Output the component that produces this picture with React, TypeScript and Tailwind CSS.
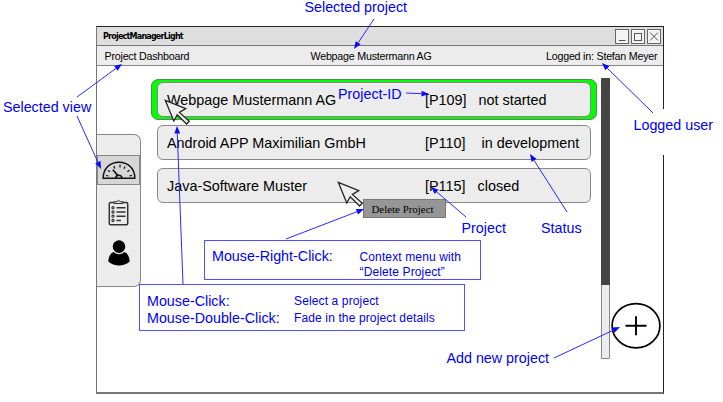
import type { ReactNode } from "react";

const sans = "font-['Liberation_Sans',Arial,sans-serif]";

function Pointer({ className }: { className: string }) {
  return (
    <svg className={`absolute ${className}`} width="28" height="28" viewBox="0 0 28 28">
      <path
        d="M1.3 1.3 L21.8 9.6 L15.4 13.4 L25.3 22.3 L22.6 25 L13.2 15.8 L9.8 22 Z"
        fill="#eee"
        stroke="#222"
        strokeWidth="1.25"
      />
    </svg>
  );
}

function Row({ name, id, status, selected, gap }: { name: string; id: string; status: string; selected?: boolean; gap: string }) {
  const card = (
    <div className="flex h-[35px] w-[434px] items-center rounded-[6px] border border-[#888] bg-[#ececec] pl-[9px] pt-[2px] text-[14.4px] leading-none text-black">
      <span className="w-[258px] whitespace-nowrap">{name}</span>
      <span className="whitespace-nowrap">{id}</span>
      <span className={`whitespace-nowrap ${gap}`}>{status}</span>
    </div>
  );
  if (!selected) return <div className="pl-[6px]">{card}</div>;
  return <div className="flex h-[41px] w-[446px] items-center rounded-[7px] border border-[#5c875c] bg-[#00ff00] pl-[5px]">{card}</div>;
}

function Gauge() {
  return (
    <svg width="34" height="19" viewBox="0 0 34 19" fill="none" stroke="#111" strokeWidth="1.2">
      <path d="M1.2 17.2 C1.2 7.5 8 1.2 17 1.2 S32.8 7.5 32.8 17.2 Z" strokeWidth="1.5" />
      <path d="M4 14.5 L6.5 15 M6 9.5 L8 10.8 M11.8 5 L12.8 7.4 M18 3.8 V6.5 M23 5.5 L22 7.8 M27.4 9.3 L25.4 10.8 M30 14.3 L27.4 15" />
      <path d="M10.8 8.7 L16.3 15" strokeWidth="1.7" />
      <path d="M13.8 17 A3.1 2.7 0 0 1 20 17" strokeWidth="1.5" />
    </svg>
  );
}

function Clipboard() {
  return (
    <svg width="22" height="27" viewBox="0 0 22 27" fill="none" stroke="#333">
      <rect x="1.3" y="3.5" width="18.4" height="22.3" rx="1.2" strokeWidth="1.5" />
      <path d="M6 4.5 V2.7 H8.6 Q10.5 0 12.4 2.7 H15 V4.5 Z" fill="#ddd" />
      <path d="M8.5 8.7 H17.5 M8.5 13 H17.5 M8.5 17.2 H17.5 M8.5 21.5 H13" strokeWidth="1.4" />
      {[8.7, 13, 17.2, 21.5].map((y) => (
        <circle key={y} cx="5" cy={y} r="1.1" strokeWidth="1.1" />
      ))}
    </svg>
  );
}

function Person() {
  return (
    <svg width="22" height="26" viewBox="0 0 22 26">
      <circle cx="11" cy="6.6" r="6.3" />
      <path d="M.3 21.5 C.5 17 2.2 13.6 5.5 12.1 Q11 16.5 16.5 12.1 C19.8 13.6 21.5 17 21.7 21.5 C16 26.7 6 26.7 .3 21.5Z" />
    </svg>
  );
}

function WindowButton({ children }: { children: ReactNode }) {
  return (
    <svg className="border border-[#666] bg-[#f3f3f3]" width="14" height="15" viewBox="0 0 12 13" fill="none" stroke="#555">
      {children}
    </svg>
  );
}

function Note({ className, children }: { className: string; children: ReactNode }) {
  return <div className={`absolute whitespace-nowrap text-[14.3px] leading-[17px] text-[#0000f0] ${className}`}>{children}</div>;
}

// start x, start y, tip x, tip y
const arrows: [number, number, number, number][] = [
  [374, 19, 354, 49],
  [77, 97, 122, 64],
  [77, 116, 101, 169],
  [406, 93, 429, 94],
  [653, 113, 602, 63],
  [183, 284, 177, 126],
  [286, 239, 364, 209],
  [466, 217, 431, 187],
  [567, 212, 530, 154],
  [554, 358, 620, 327],
];

function Arrows() {
  return (
    <svg className="absolute left-0 top-0" width="723" height="402">
      {arrows.map(([x1, y1, x2, y2]) => {
        const a = Math.atan2(y2 - y1, x2 - x1);
        const bx = x2 - 7.5 * Math.cos(a);
        const by = y2 - 7.5 * Math.sin(a);
        const dx = 2.9 * Math.sin(a);
        const dy = 2.9 * Math.cos(a);
        return (
          <g key={`${x1}-${y1}`}>
            <line x1={x1} y1={y1} x2={bx} y2={by} stroke="#2929fb" strokeWidth="1" />
            <polygon points={`${x2},${y2} ${bx - dx},${by + dy} ${bx + dx},${by - dy}`} fill="#0808ff" />
          </g>
        );
      })}
    </svg>
  );
}

export default function App() {
  return (
    <div className={`relative h-[402px] w-[723px] overflow-hidden bg-white pl-[96px] pt-[26px] ${sans}`}>
      <div className="flex h-[368px] w-[568px] flex-col border border-b-2 border-[#777] border-r-[#222] border-t-[#222]">
        <div className="flex h-[19px] shrink-0 items-center border-b border-[#777] bg-[#dedede] pl-[6px] pr-[2px]">
          <span className="grow pt-[2px] font-['DejaVu_Sans',sans-serif] text-[8px] font-bold tracking-[-0.78px] text-black">ProjectManagerLight</span>
          <div className="flex gap-[2px]">
            <WindowButton><path d="M3 10.5 H9.5" /></WindowButton>
            <WindowButton><rect x="2.5" y="3.5" width="7" height="7" /></WindowButton>
            <WindowButton><path d="M2 2.5 L10 10.5 M10 2.5 L2 10.5" /></WindowButton>
          </div>
        </div>
        <div className="flex h-[20px] shrink-0 items-center border-b border-[#888] bg-[#ececec] pl-[7.5px] pt-[2px] text-[10.7px] leading-none tracking-[-0.22px] text-black">
          <span className="w-[206px]">Project Dashboard</span>
          <span className="w-[235.5px]">Webpage Mustermann AG</span>
          <span className="whitespace-nowrap">Logged in: Stefan Meyer</span>
        </div>
        <div className="flex grow">
          <nav className="mt-[68px] flex h-[153px] w-[44px] flex-col items-center rounded-r-[7px] border border-l-0 border-[#888] bg-[#ececec]">
            <div className="mt-[20px] flex h-[30px] w-[43px] shrink-0 items-center justify-center border border-[#888] bg-[#d6d6d6]"><Gauge /></div>
            <div className="mt-[14px]"><Clipboard /></div>
            <div className="mt-[14px]"><Person /></div>
          </nav>
          <main className="ml-[10px] mt-[13px] flex w-[446px] flex-col">
            <Row name="Webpage Mustermann AG" id="[P109]" status="not started" gap="ml-[12px]" selected />
            <div className="mt-[5px]"><Row name="Android APP Maximilian GmbH" id="[P110]" status="in development" gap="ml-[16px]" /></div>
            <div className="mt-[8px]"><Row name="Java-Software Muster" id="[P115]" status="closed" gap="ml-[12px]" /></div>
          </main>
          <div className="ml-[4px] mt-[12px] h-[281px] w-[9px] rounded-[1px] border border-[#888] bg-[#ececec]">
            <div className="-ml-px -mt-px h-[207px] w-[9px] rounded-[1px] bg-[#444]" />
          </div>
          <svg className="ml-[1px] mt-[236px]" width="50" height="48" viewBox="0 0 50 48" fill="none" stroke="#000" strokeWidth="1.7">
            <ellipse cx="25" cy="23.8" rx="23.9" ry="22.1" />
            <path d="M14.5 23.8 H35.5 M25 14.3 V33.3" strokeWidth="1.9" />
          </svg>
        </div>
      </div>

      <Pointer className="left-[164px] top-[99px]" />
      <Pointer className="left-[337px] top-[181px]" />
      <div className="absolute left-[363px] top-[199px] flex h-[19px] w-[83px] items-center justify-center border border-[#777] bg-[#969696] pr-1 pt-px font-['Liberation_Serif',serif] text-[10.9px] leading-none text-black">Delete Project</div>

      <div className="absolute left-[631px] top-[109px] h-[46px] w-[92px] bg-white" />
      <Note className="left-[304.5px] top-[-1px]">Selected project</Note>
      <Note className="left-[3px] top-[99px]">Selected view</Note>
      <Note className="left-[338px] top-[86px]">Project-ID</Note>
      <Note className="left-[633.5px] top-[117px]">Logged user</Note>
      <Note className="left-[461.5px] top-[220px]">Project</Note>
      <Note className="left-[541px] top-[220px]">Status</Note>
      <Note className="left-[446.5px] top-[350px]">Add new project</Note>

      <div className="absolute left-[204px] top-[240px] flex h-[40px] w-[277px] border border-[#5050ff] pl-[7px] pt-[7px] text-[14.3px] leading-[17px] text-[#0000f0]">
        <span className="w-[147.5px]">Mouse-Right-Click:</span>
        <span className="whitespace-nowrap pt-[2px] text-[12px] leading-[15px] tracking-[0.13px]">Context menu with<br />“Delete Project”</span>
      </div>
      <div className="absolute left-[139px] top-[284px] grid h-[47px] w-[326px] grid-cols-[147px_1fr] content-start border border-[#5050ff] pl-[7px] pt-[8px] text-[14.3px] leading-[17px] text-[#0000f0]">
        <span>Mouse-Click:</span>
        <span className="text-[12px] tracking-[0.13px]">Select a project</span>
        <span className="whitespace-nowrap">Mouse-Double-Click:</span>
        <span className="text-[12px] tracking-[0.13px]">Fade in the project details</span>
      </div>
      <Arrows />
    </div>
  );
}
